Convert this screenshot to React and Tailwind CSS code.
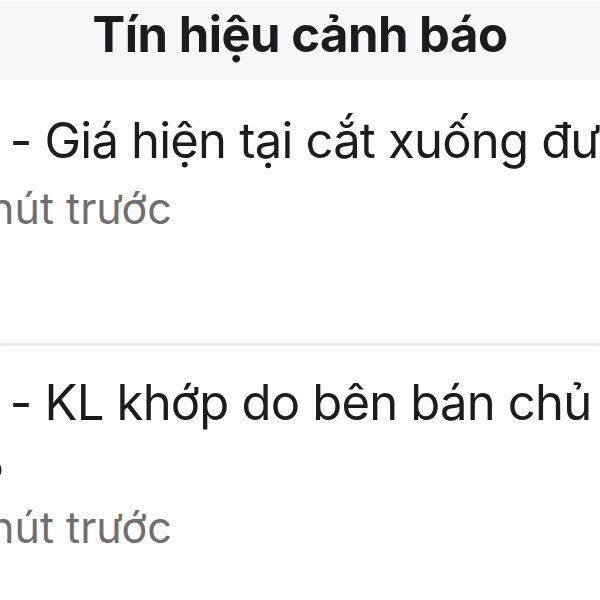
import React from "react";

const alerts = [
  {
    code: "HPG",
    lines: ["Giá hiện tại cắt xuống đường MA20"],
    time: "15 phút trước",
    pad: "pt-[32px]",
    h: "h-[263px]",
  },
  {
    code: "HPG",
    lines: ["KL khớp do bên bán chủ động", "50%"],
    time: "15 phút trước",
    pad: "pt-[22px]",
    h: "h-[248px]",
  },
];

export default function App() {
  return (
    <div
      className="w-[600px] h-[600px] overflow-hidden bg-white text-[#1c1c1e]"
      style={{ fontFamily: "Inter, 'Noto Sans', sans-serif" }}
    >
      <div className="h-[80px] bg-[#f7f7f7] border-t-2 border-[#fcfcfc] flex justify-center pt-[8px]">
        <h1 className="text-[49px] font-bold leading-none tracking-[-0.5px]">
          Tín hiệu cảnh báo
        </h1>
      </div>

      {alerts.map((a, i) => (
        <div key={i}>
          {i > 0 && (
            <>
              <div className="h-[3px] bg-[#ececec]" />
              <div className="mx-[7px] mt-[5px] h-px bg-[#f6f6f6]" />
            </>
          )}
          <div className={`${a.h} ${a.pad} ml-[-105px] whitespace-nowrap`}>
            <p className="text-[49px] leading-[57px] tracking-[-0.8px]">
              {a.code} - {a.lines[0]}
              {a.lines[1] && (
                <>
                  <br />
                  <span className="inline-block w-[111px] text-right">
                    {a.lines[1]}
                  </span>
                </>
              )}
            </p>
            <p className="mt-[14px] ml-[12px] text-[43px] leading-[50px] text-[#6e6e73]">
              {a.time}
            </p>
          </div>
        </div>
      ))}
    </div>
  );
}
